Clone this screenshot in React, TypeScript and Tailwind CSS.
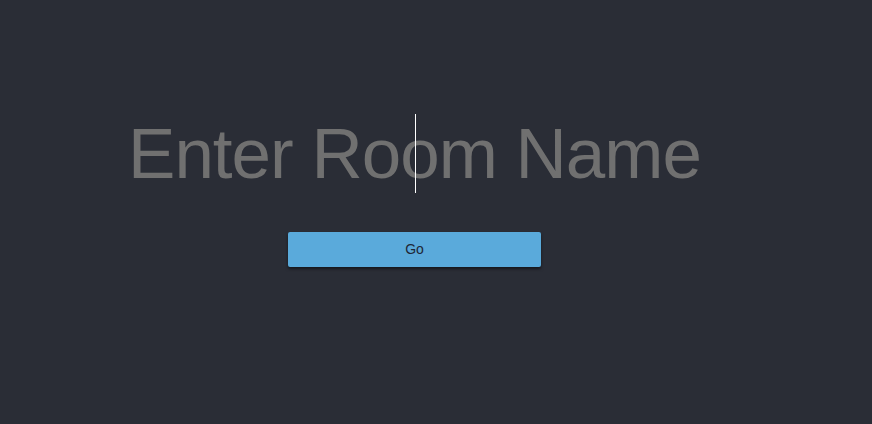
import React from "react";

export default function App() {
  return (
    <div className="w-[872px] h-[424px] bg-[#2a2d36] overflow-hidden" style={{ fontFamily: '"Liberation Sans", Arial, sans-serif' }}>
      <div className="w-[829px] flex flex-col items-center pt-[114px]">
        <div className="relative h-[79px] w-[701px] flex items-center justify-center">
          <input
            className="w-full h-full bg-transparent text-center text-[71px] tracking-[-1px] leading-none text-[#707070] placeholder-[#707070] outline-none border-0"
            placeholder="Enter Room Name"
            style={{ fontFamily: '"Liberation Sans", Arial, sans-serif' }}
          />
          <div className="absolute left-[351px] top-0 h-[79px] w-px bg-white" />
        </div>
        <button className="mt-[39px] w-[253px] h-[35px] rounded-[2px] bg-[#5aaadb] text-[#1e2735] text-[14px] shadow-[0_2px_3px_rgba(0,0,0,0.5)]">
          Go
        </button>
      </div>
    </div>
  );
}
